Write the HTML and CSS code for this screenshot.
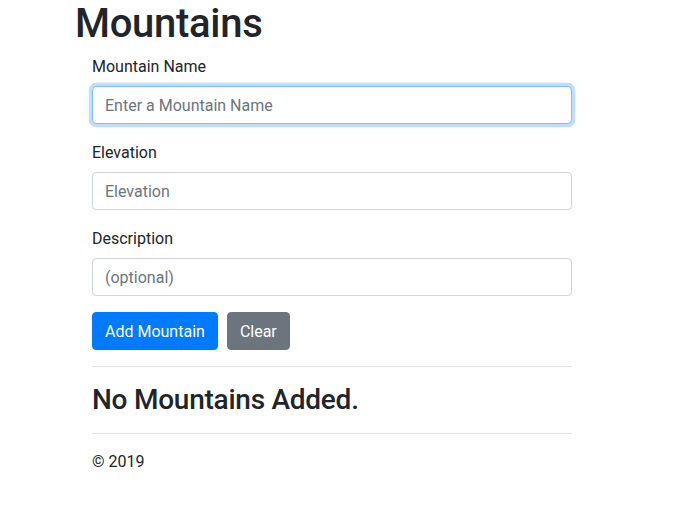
FILE: index.html
```html
<!DOCTYPE html>
<html lang="en">
<head>
<meta charset="utf-8">
<title>Mountains</title>
<link rel="stylesheet" href="styles.css">
</head>
<body>
<div class="page">
  <h1 class="title">Mountains</h1>
  <div class="content">
    <form class="form">
      <div class="form-group">
        <label class="label" for="name">Mountain Name</label>
        <input class="input input-focus" id="name" type="text" placeholder="Enter a Mountain Name" autofocus>
      </div>
      <div class="form-group">
        <label class="label" for="elev">Elevation</label>
        <input class="input" id="elev" type="text" placeholder="Elevation">
      </div>
      <div class="form-group">
        <label class="label" for="desc">Description</label>
        <input class="input" id="desc" type="text" placeholder="(optional)">
      </div>
      <div class="actions">
        <button type="button" class="btn btn-primary">Add Mountain</button>
        <button type="button" class="btn btn-secondary">Clear</button>
      </div>
    </form>
    <hr class="rule">
    <h3 class="empty">No Mountains Added.</h3>
    <hr class="rule">
    <footer class="footer">© 2019</footer>
  </div>
</div>
</body>
</html>
```
FILE: styles.css
```css
* { box-sizing: border-box; }
html, body { margin: 0; padding: 0; background: #fff; }
body {
  font-family: Roboto, "Noto Sans", "Liberation Sans", sans-serif;
  font-size: 16px;
  line-height: 1.5;
  color: #212529;
}
.page { padding-left: 75px; padding-top: 2px; }
.title {
  margin: 0 0 8px 0;
  font-size: 40px;
  font-weight: 500;
  line-height: 44px;
  letter-spacing: -0.3px;
}
.content { margin-left: 17px; width: 480px; }
.form { margin: 0; }
.form-group { margin-bottom: 16px; display: flex; flex-direction: column; }
.label { display: block; margin-bottom: 7px; padding-top: 1px; line-height: 24px; }
.input {
  display: block;
  width: 100%;
  height: 38px;
  padding: 6px 12px;
  font-family: inherit;
  font-size: 16px;
  line-height: 24px;
  color: #495057;
  background: #fff;
  border: 1px solid #ced4da;
  border-radius: 4px;
  outline: none;
}
.input::placeholder { color: #6c757d; opacity: 1; }
.input-focus, .input:focus {
  border-color: #80bdff;
  box-shadow: 0 0 0 3.2px rgba(0,123,255,.25);
}
.actions { display: flex; gap: 9px; }
.btn {
  height: 38px;
  font-family: inherit;
  font-size: 16px;
  line-height: 24px;
  padding: 7px 12px 5px;
  border: 1px solid transparent;
  border-radius: 4px;
  color: #fff;
  cursor: pointer;
}
.btn-primary { background: #007bff; border-color: #007bff; }
.btn-secondary { background: #6c757d; border-color: #6c757d; }
.rule {
  margin: 16px 0;
  border: 0;
  border-top: 1px solid rgba(0,0,0,.1);
  height: 0;
}
.empty {
  margin: 0 0 8px 0;
  font-size: 28px;
  font-weight: 500;
  line-height: 33.6px;
  letter-spacing: -0.25px;
}
.footer { line-height: 24px; }
```
